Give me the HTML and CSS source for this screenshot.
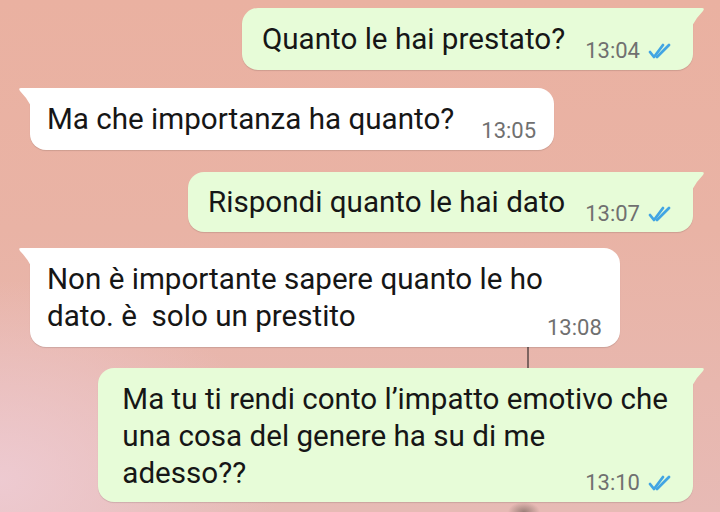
FILE: index.html
```html
<!DOCTYPE html>
<html lang="it">
<head>
  <meta charset="UTF-8">
  <title>Chat</title>
  <link rel="stylesheet" href="styles.css">
</head>
<body>
  <div class="chat">
    <!-- messaggio inviato -->
    <div class="bubble bubble--out">
      <p class="text">Quanto le hai prestato?</p>
      <span class="meta">
        <span class="time">13:04</span>
        <svg class="ticks" viewBox="0 0 28 16"><path d="M2 9 L6 14 L15 2"/><path d="M9 14 L21 2"/></svg>
      </span>
    </div>

    <div class="bubble bubble--in">
      <p class="text">Ma che importanza ha quanto?</p>
      <span class="meta"><span class="time">13:05</span></span>
    </div>

    <div class="bubble bubble--out bubble--short">
      <p class="text">Rispondi quanto le hai dato</p>
      <span class="meta">
        <span class="time">13:07</span>
        <svg class="ticks" viewBox="0 0 28 16"><path d="M2 9 L6 14 L15 2"/><path d="M9 14 L21 2"/></svg>
      </span>
    </div>

    <div class="bubble bubble--in bubble--tight">
      <p class="text">Non è importante sapere quanto le ho<br>dato. è&nbsp; solo un prestito</p>
      <span class="meta"><span class="time">13:08</span></span>
    </div>

    <div class="bubble bubble--out bubble--stack">
      <p class="text">Ma tu ti rendi conto l’impatto emotivo che<br>una cosa del genere ha su di me<br>adesso??</p>
      <span class="meta">
        <span class="time">13:10</span>
        <svg class="ticks" viewBox="0 0 28 16"><path d="M2 9 L6 14 L15 2"/><path d="M9 14 L21 2"/></svg>
      </span>
    </div>
  </div>
</body>
</html>
```

FILE: styles.css
```css
* {
  box-sizing: border-box;
}
/* --- sfondo --- */
body {
  margin: 0;
  width: 720px;
  height: 512px;
  overflow: hidden;
  font-family: Roboto, sans-serif;
  background:
    linear-gradient(to right, transparent 527px, #7d6460 527px, #7d6460 529px, transparent 529px) 0 345px / 720px 23px no-repeat,
    radial-gradient(ellipse 16px 10px at 524px 512px, #9a7f78, transparent),
    radial-gradient(ellipse 280px 200px at 0 480px, rgba(238, 204, 212, 0.9), transparent),
    linear-gradient(180deg, #eab1a1 0%, #e9b3a5 45%, #e8b7ae 75%, #e7bab5 100%);
}
.chat {
  display: flex;
  flex-direction: column;
  gap: 18px;
  padding: 8px 27px 0 30px;
}
/* --- bolle --- */
.bubble {
  position: relative;
  display: flex;
  align-items: flex-end;
  padding: 12.5px 17px 12.5px 20px;
  border-radius: 16px;
  box-shadow: 0 1px 1px rgba(0, 0, 0, 0.12);
}
.bubble--out {
  align-self: flex-end;
  background-color: #e7fcd8;
  border-top-right-radius: 0;
}
.bubble--out::after {
  content: "";
  position: absolute;
  top: 0;
  right: -12px;
  width: 13px;
  height: 18px;
  background-color: #e7fcd8;
  clip-path: path('M0 0 H10 Q13 0 11 3 Q4 10 0 18 Z');
}
.bubble--in {
  align-self: flex-start;
  background-color: #fff;
  border-top-left-radius: 0;
  padding-left: 17px;
  padding-right: 18px;
}
.bubble--in::after {
  content: "";
  position: absolute;
  top: 0;
  left: -12px;
  width: 13px;
  height: 18px;
  background-color: #fff;
  clip-path: path('M13 0 H3 Q0 0 2 3 Q9 10 13 18 Z');
}
.text {
  margin: 0;
  font-size: 29.6px;
  line-height: 37px;
  color: #161616;
  white-space: nowrap;
}
.meta {
  display: flex;
  align-items: center;
  gap: 8px;
  margin-left: 20px;
  margin-bottom: -4px;
  font-size: 22px;
  line-height: 22px;
  color: #707070;
  white-space: nowrap;
}
.bubble--in .meta {
  margin-left: 27px;
}
.ticks {
  width: 28px;
  height: 16px;
  fill: none;
  stroke: #42a5e3;
  stroke-width: 2.8;
  stroke-linecap: round;
  stroke-linejoin: round;
}
.bubble--short {
  margin: 4px 0 -2px;
  padding-top: 11.5px;
  padding-bottom: 11.5px;
}
/* tempo accanto all'ultima riga */
.bubble--in.bubble--tight .meta {
  margin-left: 4px;
}
.bubble--stack {
  flex-direction: column;
  align-items: stretch;
  margin-top: 3px;
  padding-left: 24px;
  padding-right: 25px;
}
.bubble--stack .meta {
  align-self: flex-end;
  margin: -20px -8px -4px 0;
}
```
